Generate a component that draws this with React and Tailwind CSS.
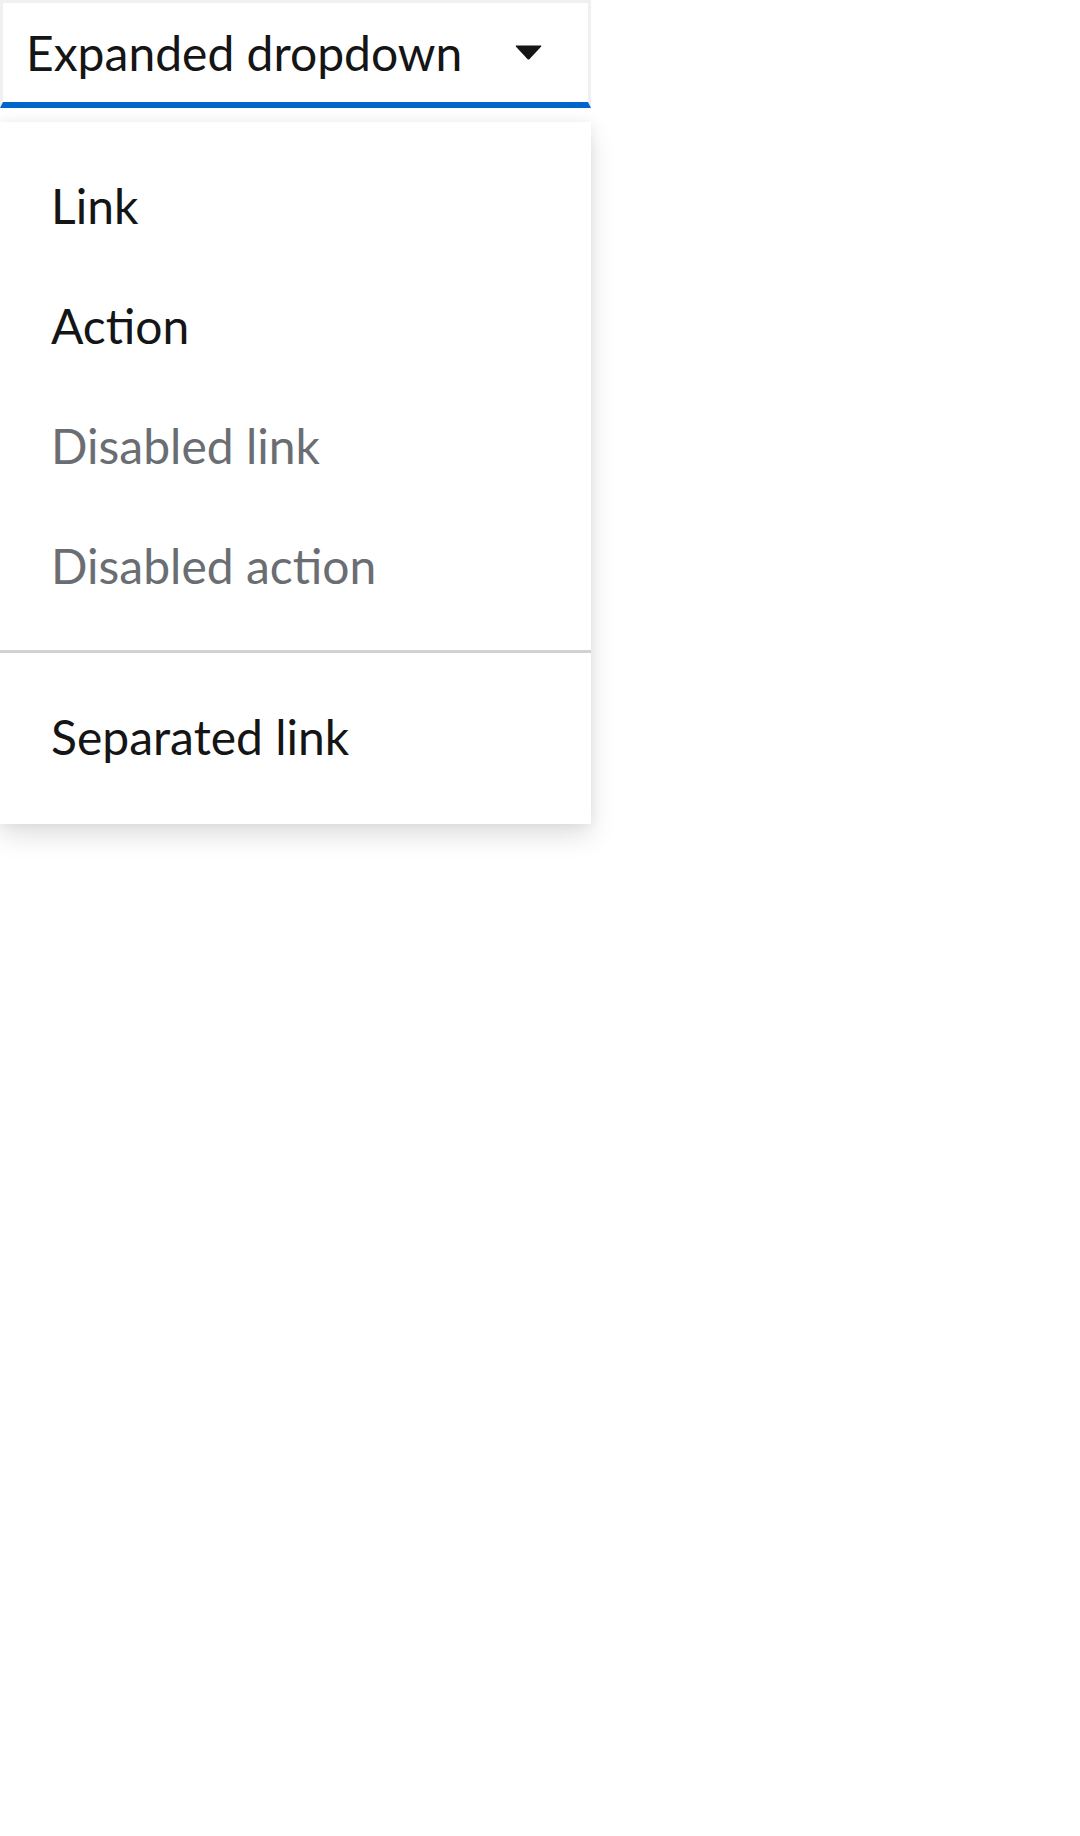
const items = [
  { label: 'Link', disabled: false },
  { label: 'Action', disabled: false },
  { label: 'Disabled link', disabled: true },
  { label: 'Disabled action', disabled: true },
]

function Caret() {
  return (
    <svg width="27" height="15" viewBox="0 0 27 15" className="block">
      <path d="M1.5 0.5 H25.5 Q27 0.5 26 1.8 L14.6 14 Q13.5 15 12.4 14 L1 1.8 Q0 0.5 1.5 0.5 Z" fill="#151515" />
    </svg>
  )
}

export default function App() {
  return (
    <div className="min-h-screen bg-white" style={{ fontFamily: 'Lato, "Noto Sans", sans-serif' }}>
      <div className="w-[591px]">
        <button
          type="button"
          className="flex h-[108px] w-full items-center justify-between border-x-[3px] border-t-[3px] border-b-[6px] border-x-[#f0f0f0] border-t-[#f0f0f0] border-b-[#0066cc] bg-white pl-[23px] pr-[46px] text-[48px] leading-[72px] text-[#151515]"
        >
          <span>Expanded dropdown</span>
          <Caret />
        </button>

        <ul className="mt-[14px] bg-white pt-[24px] pb-[27px] shadow-[0_12px_24px_0_rgba(3,3,3,0.12),0_0_12px_0_rgba(3,3,3,0.06)]">
          {items.map((item) => (
            <li key={item.label}>
              <span
                className={`block px-[51px] py-[24px] text-[48px] leading-[72px] ${
                  item.disabled ? 'text-[#6a6e73]' : 'text-[#151515]'
                }`}
              >
                {item.label}
              </span>
            </li>
          ))}
          <li className="my-[24px] h-[3px] bg-[#d2d2d2]" />
          <li>
            <span className="block px-[51px] py-[24px] text-[48px] leading-[72px] text-[#151515]">
              Separated link
            </span>
          </li>
        </ul>
      </div>
    </div>
  )
}
